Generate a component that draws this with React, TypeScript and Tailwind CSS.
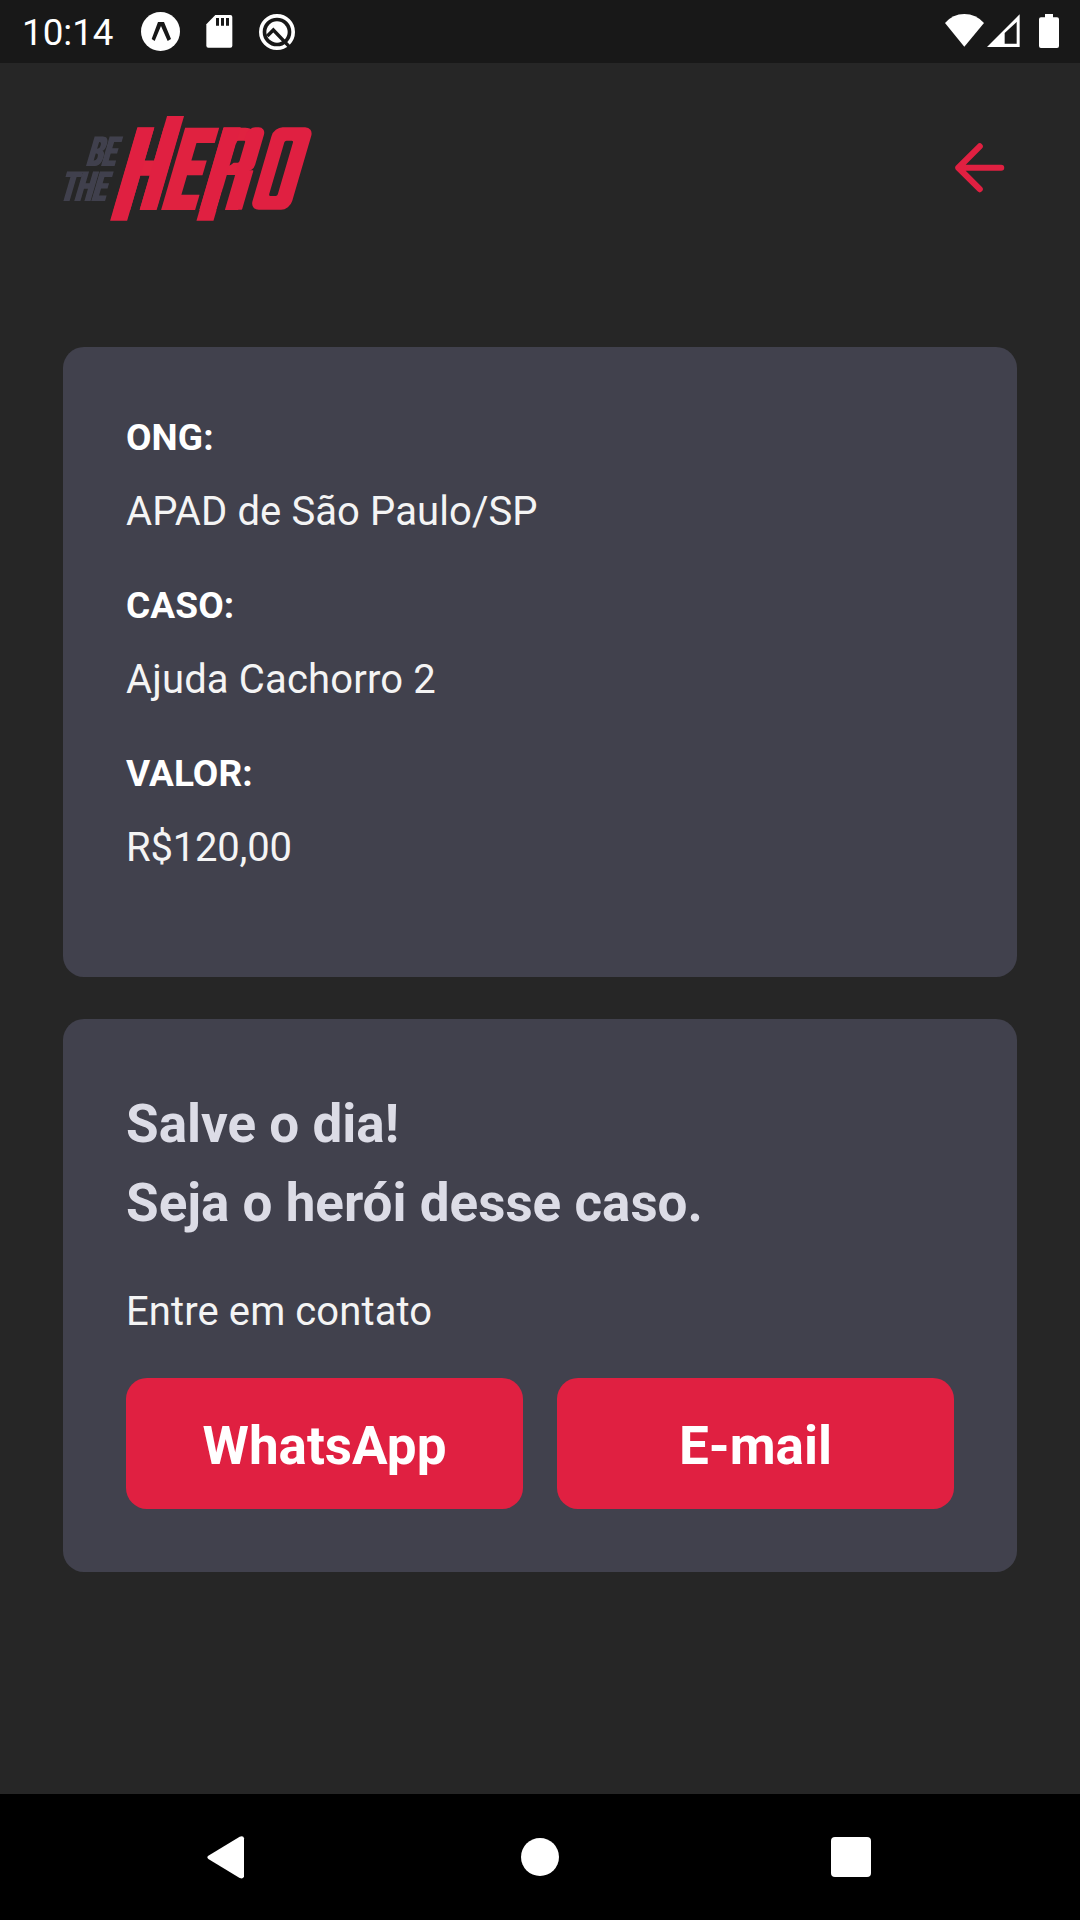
import React from "react";

const details = [
  { label: "ONG:", value: "APAD de São Paulo/SP", spacing: "tracking-[0.1px]" },
  { label: "CASO:", value: "Ajuda Cachorro 2", spacing: "tracking-[0.15px]" },
  { label: "VALOR:", value: "R$120,00", spacing: "tracking-[-0.2px]" },
];

function Logo() {
  return (
    <svg width="250" height="107" viewBox="39 45 750 321" role="img" aria-label="Be The Hero" className="block overflow-visible">
      <defs>
        <filter id="widen" filterUnits="userSpaceOnUse" x="0" y="0" width="900" height="450">
          <feMorphology operator="dilate" radius="7.5 0" />
        </filter>
        <filter id="widenSmall" filterUnits="userSpaceOnUse" x="0" y="0" width="400" height="450">
          <feMorphology operator="dilate" radius="3 0" />
        </filter>
      </defs>
      <g fill="#41414d" fontFamily="Roboto" fontWeight="900" fontSize="125" filter="url(#widenSmall)">
        <text transform="translate(0 198) skewX(-16.3)" x="107" y="0" textLength="85" lengthAdjust="spacingAndGlyphs">BE</text>
        <text transform="translate(0 303) skewX(-16.3)" x="27" y="0" textLength="136" lengthAdjust="spacingAndGlyphs">THE</text>
      </g>
      <g fill="#e02041" fontFamily="Roboto" fontWeight="900" fontSize="347" filter="url(#widen)">
        <g transform="translate(0 329) skewX(-16.3)">
          <text x="190" y="0" textLength="130" lengthAdjust="spacingAndGlyphs">H</text>
          <text x="333" y="0" textLength="96" lengthAdjust="spacingAndGlyphs">E</text>
          <text x="448" y="0" textLength="112" lengthAdjust="spacingAndGlyphs">R</text>
          <text x="608" y="-5" fontSize="332" textLength="102" lengthAdjust="spacingAndGlyphs">O</text>
        </g>
      </g>
      <g fill="#e02041" transform="translate(0 329) skewX(-16.3)">
        <rect x="190" y="-247" width="51" height="280" />
        <rect x="269" y="-281" width="51" height="281" />
        <rect x="449" y="-247" width="51" height="280" />
        <rect x="522" y="-247" width="54" height="134" rx="22" />
        <rect x="525" y="-118" width="51" height="118" rx="2" />
        <rect x="500" y="-104" width="25" height="106" fill="#262626" />
        <rect x="501" y="-207" width="25" height="66" rx="4" fill="#262626" />
        <rect x="600" y="-247" width="119" height="247" rx="26" />
        <rect x="644" y="-207" width="26" height="166" rx="5" fill="#262626" />
      </g>
    </svg>
  );
}

function StatusBar() {
  return (
    <div className="flex h-[63px] shrink-0 items-center justify-between bg-[#181818] pl-[22px] pr-[21px]">
      <div className="flex h-full items-center">
        <span className="w-[119px] pt-[2px] text-[36.75px] leading-[44px] text-white">10:14</span>
        <svg width="39" height="39" viewBox="423 36 117 117" className="block">
          <circle cx="481.5" cy="94.5" r="58.5" fill="#fff" />
          <path d="M474 66h18l21 51-10 6-20-45-19 45-9-6z" fill="#181818" />
        </svg>
        <svg width="27" height="33" viewBox="617 45 81 99" className="ml-[26px] block">
          <path d="M645 45h45q6 0 6 6v86q0 6-6 6h-66q-6 0-6-6V73z" fill="#fff" />
          <path d="M647 54h9v23h-9zM662 54h9v23h-9zM677 54h9v23h-9z" fill="#181818" />
        </svg>
        <svg width="38" height="38" viewBox="774 37 114 114" className="ml-[25px] block">
          <circle cx="831" cy="94" r="48.5" fill="none" stroke="#fff" strokeWidth="11" />
          <circle cx="831" cy="94" r="32" fill="#fff" />
          <path d="M802 106l18-18 50 52" fill="none" stroke="#181818" strokeWidth="10" />
        </svg>
      </div>
      <div className="flex h-full items-start pt-[14px]">
        <svg width="39" height="33" viewBox="75 42 117 99" className="block">
          <path d="M75 69Q98 42 133 42T192 69L133 140z" fill="#fff" />
        </svg>
        <svg width="33" height="33" viewBox="202 42 99 99" className="ml-[3px] block">
          <path fillRule="evenodd" d="M202 141L300 43v98zM255 99v32h36V66z" fill="#fff" />
        </svg>
        <svg width="20" height="34" viewBox="357 42 60 102" className="ml-[19px] block">
          <path d="M375 42h24v10h12q6 0 6 6v80q0 6-6 6h-48q-6 0-6-6V58q0-6 6-6h12z" fill="#fff" />
        </svg>
      </div>
    </div>
  );
}

function NavBar() {
  return (
    <div className="flex h-[126px] shrink-0 items-center bg-black pl-[207px]">
      <svg width="38" height="43" viewBox="80 167 114 129" className="block">
        <path d="M84 226L178 169Q190 165 191 174V288Q190 297 178 293L84 236Q78 231 84 226z" fill="#fff" />
      </svg>
      <div className="ml-[276px] size-[38px] rounded-full bg-white" />
      <div className="ml-[272px] size-[40px] rounded-[4px] bg-white" />
    </div>
  );
}

export default function App() {
  return (
    <div className="flex h-[1920px] w-[1080px] flex-col overflow-hidden bg-[#262626] font-[Roboto,sans-serif]">
      <StatusBar />
      <main className="flex flex-1 flex-col px-[63px]">
        <header className="mt-[52px] flex h-[107px] items-center justify-between">
          <Logo />
          <button aria-label="Voltar" className="mb-[1px] mr-[0.5px] block">
            <svg width="73.5" height="73.5" viewBox="0 0 24 24" fill="none" stroke="#e02041" strokeWidth="2" strokeLinecap="round" strokeLinejoin="round">
              <path d="M19 12H5M12 19l-7-7 7-7" />
            </svg>
          </button>
        </header>
        <section className="mt-[125px] h-[630px] rounded-[21px] bg-[#41414d] p-[63px]">
          {details.map((item) => (
            <div key={item.label} className="mb-[40px]">
              <p className="text-[37px] font-bold leading-[55px] tracking-[0.1px] text-white">{item.label}</p>
              <p className={`mt-[20px] text-[40px] leading-[53px] text-[#f4f4f4] ${item.spacing}`}>{item.value}</p>
            </div>
          ))}
        </section>
        <section className="mt-[42px] h-[553px] rounded-[21px] bg-[#41414d] px-[63px] pt-[66px]">
          <h1 className="text-[53px] font-bold leading-[79px] text-[#dcdce6]">
            Salve o dia!
            <br />
            Seja o herói desse caso.
          </h1>
          <p className="mt-[42px] text-[40px] leading-[53px] tracking-[0.1px] text-[#f4f4f4]">Entre em contato</p>
          <div className="mt-[40px] flex justify-between">
            <button className="h-[131px] w-[397px] rounded-[21px] bg-[#e02041] pt-[6px] text-[53px] font-bold text-white">WhatsApp</button>
            <button className="h-[131px] w-[397px] rounded-[21px] bg-[#e02041] pt-[6px] text-[53px] font-bold text-white">E-mail</button>
          </div>
        </section>
      </main>
      <NavBar />
    </div>
  );
}
